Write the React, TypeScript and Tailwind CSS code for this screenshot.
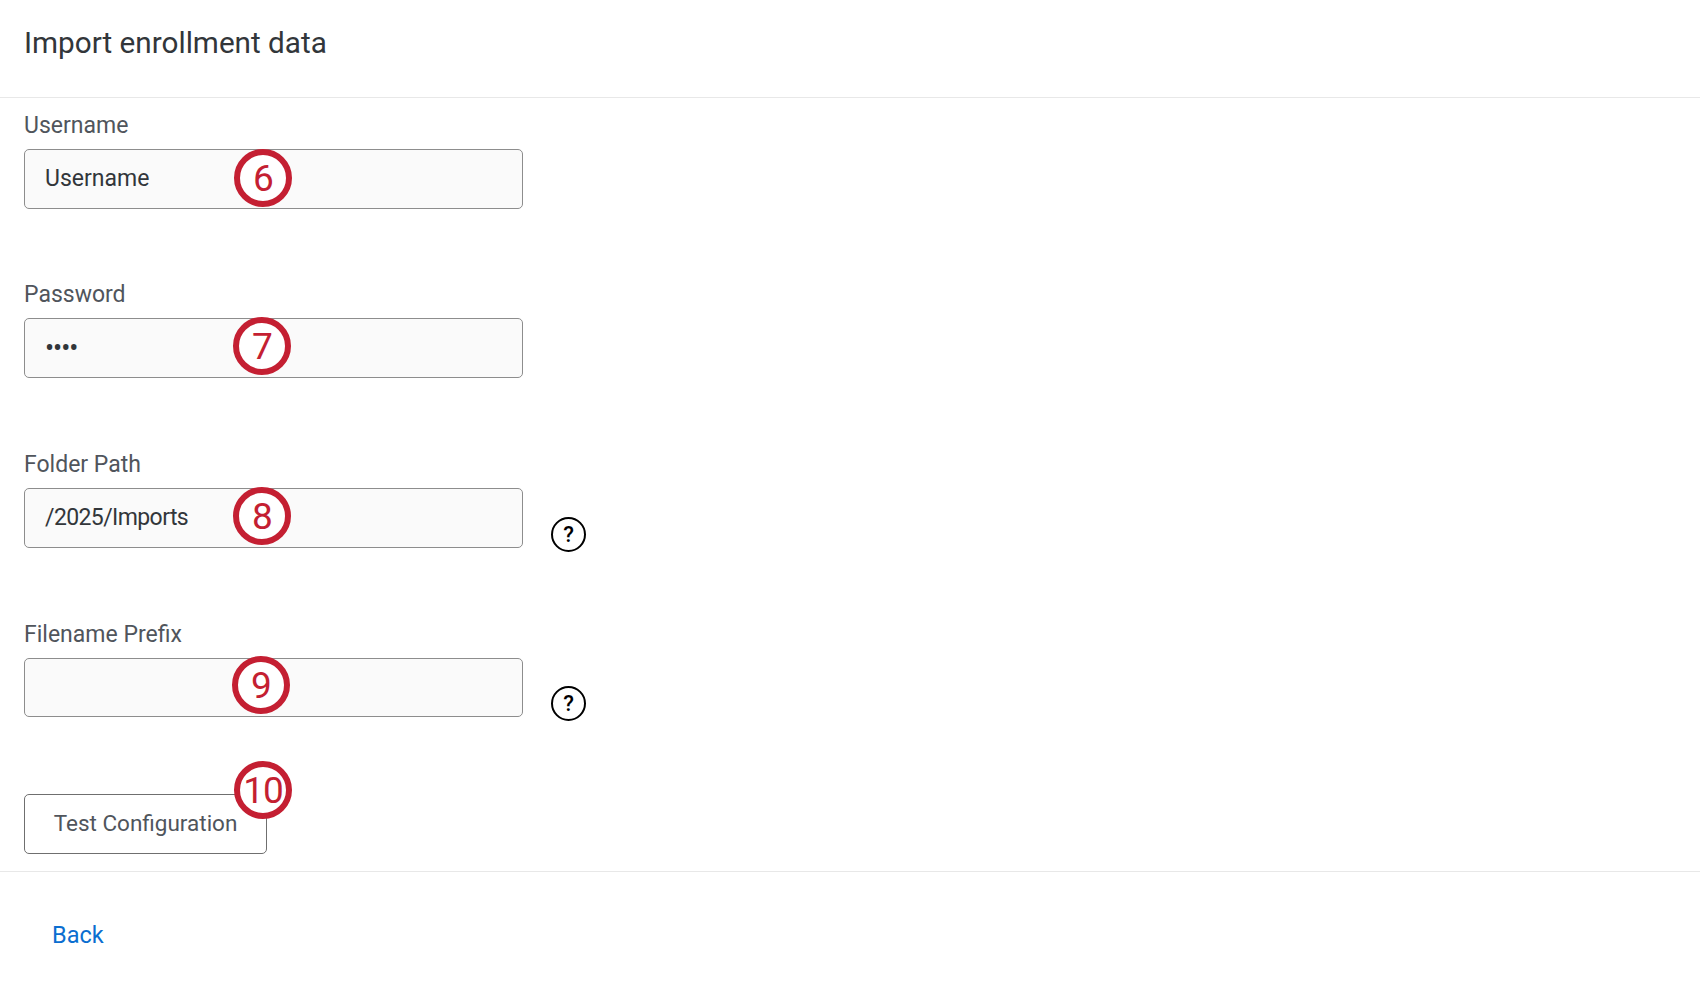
import type { ReactNode } from "react";

function Badge({ n, className }: { n: number; className: string }) {
  return (
    <span
      className={`absolute flex h-[58px] w-[58px] items-center justify-center rounded-full border-[6px] border-[#c41f32] bg-white text-[37px] leading-none tracking-[-1px] text-[#c41f32] ${className}`}
    >
      {n}
    </span>
  );
}

function HelpIcon() {
  return (
    <span className="mb-[-4px] ml-[28px] flex h-[35px] w-[35px] items-center justify-center rounded-full border-2 border-black text-[22px] font-medium leading-none text-black">
      ?
    </span>
  );
}

function Field({
  label,
  top,
  help,
  inputHeight,
  children,
}: {
  label: string;
  top: string;
  help?: boolean;
  inputHeight: string;
  children: ReactNode;
}) {
  return (
    <div className={top}>
      <label className="block text-[23px] leading-[30px] text-[#50555c]">{label}</label>
      <div className="mt-[8px] flex items-end">
        <div
          className={`relative flex w-[499px] items-center rounded-[5px] border border-[#8d8d8d] bg-[#fafafa] px-[20px] text-[23px] text-[#32363a] ${inputHeight}`}
        >
          {children}
        </div>
        {help && <HelpIcon />}
      </div>
    </div>
  );
}

export default function App() {
  return (
    <div className="h-[992px] w-full overflow-hidden bg-white font-['Roboto',sans-serif]">
      <header className="flex h-[98px] items-center border-b border-[#e8e8e8] px-[24px] pb-[10px]">
        <h1 className="text-[29.7px] font-normal text-[#32363a]">Import enrollment data</h1>
      </header>
      <main className="h-[774px] border-b border-[#e8e8e8] px-[24px] pt-[13px]">
        <Field label="Username" top="" inputHeight="h-[60px]">
          Username
          <Badge n={6} className="left-[209px] top-[-1px]" />
        </Field>
        <Field label="Password" top="mt-[71px]" inputHeight="h-[60px]">
          <span className="text-[27px] leading-none tracking-[-1px]">••••</span>
          <Badge n={7} className="left-[208px] top-[-2px]" />
        </Field>
        <Field label="Folder Path" top="mt-[72px]" help inputHeight="h-[60px]">
          <span className="tracking-[-0.6px]">/2025/Imports</span>
          <Badge n={8} className="left-[208px] top-[-2px]" />
        </Field>
        <Field label="Filename Prefix" top="mt-[72px]" help inputHeight="h-[59px]">
          <Badge n={9} className="left-[207px] top-[-3px]" />
        </Field>
        <div className="relative mt-[77px] w-[243px]">
          <button className="h-[60px] w-[243px] rounded-[5px] border border-[#6f6f6f] bg-white text-[22.5px] text-[#50555c]">
            Test Configuration
          </button>
          <Badge n={10} className="left-[210px] top-[-33px]" />
        </div>
      </main>
      <footer className="px-[52px] pt-[48px]">
        <a className="text-[23.5px] leading-[30px] text-[#0b6ed0]">Back</a>
      </footer>
    </div>
  );
}
